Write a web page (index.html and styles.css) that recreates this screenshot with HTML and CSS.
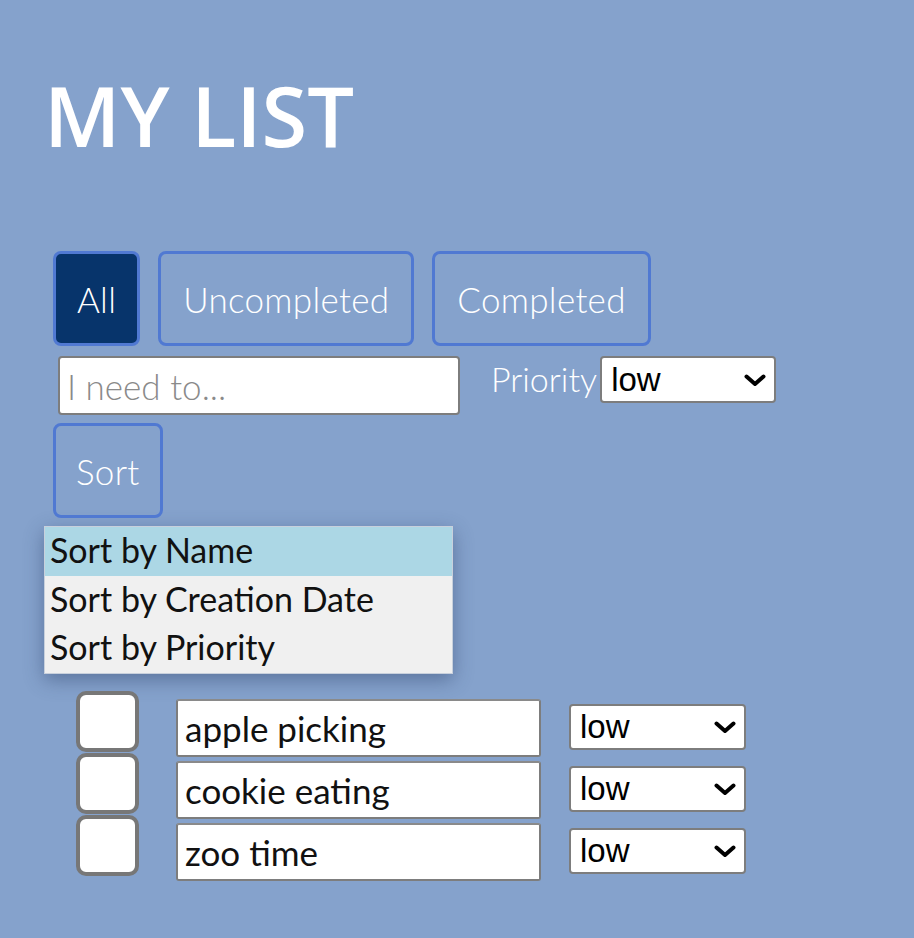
FILE: index.html
```html
<!DOCTYPE html>
<html>
<head>
<meta charset="utf-8">
<link rel="stylesheet" href="styles.css">
</head>
<body>
<div class="page">
  <h1 class="title">MY LIST</h1>
  <div class="filters">
    <button class="btn btn-active">All</button>
    <button class="btn">Uncompleted</button>
    <button class="btn">Completed</button>
  </div>
  <div class="add-row">
    <input class="new-input" type="text" placeholder="I need to...">
    <span class="prio-label">Priority</span>
    <div class="sel-wrap sel-top">
      <select class="sel"><option>low</option></select>
      <svg class="chev" viewBox="0 0 22 13" width="22" height="13"><path d="M2.5 2.5 L11 10 L19.5 2.5" fill="none" stroke="#000" stroke-width="4" stroke-linecap="round" stroke-linejoin="round"/></svg>
    </div>
  </div>
  <div class="sort-row">
    <button class="btn btn-sort">Sort</button>
  </div>
  <ul class="menu">
    <li class="menu-item menu-hover">Sort by Name</li>
    <li class="menu-item">Sort by Creation Date</li>
    <li class="menu-item">Sort by Priority</li>
  </ul>
  <div class="list">
    <div class="item">
      <div class="check"></div>
      <input class="item-input" type="text" value="apple picking">
      <div class="sel-wrap sel-item">
        <select class="sel"><option>low</option></select>
        <svg class="chev" viewBox="0 0 22 13" width="22" height="13"><path d="M2.5 2.5 L11 10 L19.5 2.5" fill="none" stroke="#000" stroke-width="4" stroke-linecap="round" stroke-linejoin="round"/></svg>
      </div>
    </div>
    <div class="item">
      <div class="check"></div>
      <input class="item-input" type="text" value="cookie eating">
      <div class="sel-wrap sel-item">
        <select class="sel"><option>low</option></select>
        <svg class="chev" viewBox="0 0 22 13" width="22" height="13"><path d="M2.5 2.5 L11 10 L19.5 2.5" fill="none" stroke="#000" stroke-width="4" stroke-linecap="round" stroke-linejoin="round"/></svg>
      </div>
    </div>
    <div class="item">
      <div class="check"></div>
      <input class="item-input" type="text" value="zoo time">
      <div class="sel-wrap sel-item">
        <select class="sel"><option>low</option></select>
        <svg class="chev" viewBox="0 0 22 13" width="22" height="13"><path d="M2.5 2.5 L11 10 L19.5 2.5" fill="none" stroke="#000" stroke-width="4" stroke-linecap="round" stroke-linejoin="round"/></svg>
      </div>
    </div>
  </div>
</div>
</body>
</html>
```
FILE: styles.css
```css
html, body {
  margin: 0;
  padding: 0;
  background: #85a2cc;
}
body {
  font-family: "Lato", "Open Sans", sans-serif;
  min-height: 938px;
}
.page {
  padding: 65px 0 0 44px;
}
.title {
  margin: 0;
  font-family: "Open Sans", sans-serif;
  font-weight: 600;
  font-size: 83px;
  line-height: 100px;
  color: #fff;
}
.filters {
  display: flex;
  gap: 18px;
  margin: 86px 0 0 9px;
}
.btn {
  font-family: "Lato", sans-serif;
  font-weight: 300;
  font-size: 35px;
  letter-spacing: 0.3px;
  color: #fff;
  background: transparent;
  border: 3px solid #5079d2;
  border-radius: 8px;
  height: 95px;
  padding: 0 22px;
  cursor: pointer;
}
.btn-active {
  background: #07346b;
  padding: 0 21px;
}
.add-row {
  display: flex;
  align-items: flex-start;
  margin: 10px 0 0 14px;
}
.new-input {
  box-sizing: border-box;
  width: 402px;
  height: 59px;
  border: 2px solid #7d7d7d;
  border-radius: 4px;
  padding: 0 7px;
  font-family: "Lato", sans-serif;
  font-weight: 300;
  font-size: 35px;
  background: #fff;
  margin: 0;
}
.new-input::placeholder {
  color: #8a8a8a;
}
.prio-label {
  font-family: "Lato", sans-serif;
  font-weight: 300;
  font-size: 34px;
  line-height: 46px;
  color: #fff;
  margin: 0 3px 0 31px;
}
.sel-wrap {
  position: relative;
}
.sel {
  appearance: none;
  -webkit-appearance: none;
  box-sizing: border-box;
  background: #fff;
  border: 2px solid #7d7d7d;
  border-radius: 4px;
  font-family: "Liberation Sans", Arial, sans-serif;
  font-size: 33px;
  color: #000;
  padding: 0 0 0 9px;
  margin: 0;
}
.sel-top .sel {
  width: 176px;
  height: 47px;
}
.chev {
  position: absolute;
  right: 10px;
  top: 50%;
  margin-top: -6px;
  pointer-events: none;
}
.sort-row {
  margin: 8px 0 0 9px;
}
.btn-sort {
  padding: 0 20px;
}
.menu {
  list-style: none;
  margin: 8px 0 0 0;
  padding: 0;
  width: 409px;
  background: #f0f0f0;
  box-shadow: 0 6px 18px rgba(40, 60, 100, 0.45);
  border: 1px solid #c8d0dc;
  box-sizing: border-box;
}
.menu-item {
  height: 48.5px;
  line-height: 46px;
  padding: 0 5px;
  font-family: "Lato", sans-serif;
  font-size: 34px;
  color: #111;
}
.menu-hover {
  background: #acd7e5;
}
.list {
  margin: 17px 0 0 32px;
  display: flex;
  flex-direction: column;
  gap: 1px;
}
.item {
  display: flex;
  align-items: flex-start;
  height: 61px;
}
.check {
  box-sizing: border-box;
  width: 63px;
  height: 61px;
  border: 4px solid #777;
  border-radius: 10px;
  background: #fff;
}
.item-input {
  box-sizing: border-box;
  width: 365px;
  height: 58px;
  margin: 8px 0 0 37px;
  border: 2px solid #7d7d7d;
  border-top-color: #8a8a8a;
  border-radius: 3px;
  padding: 0 7px;
  font-family: "Lato", sans-serif;
  font-size: 35px;
  color: #111;
  background: #fff;
}
.sel-item {
  margin: 13px 0 0 28px;
}
.sel-item .sel {
  width: 177px;
  height: 46px;
}
```
